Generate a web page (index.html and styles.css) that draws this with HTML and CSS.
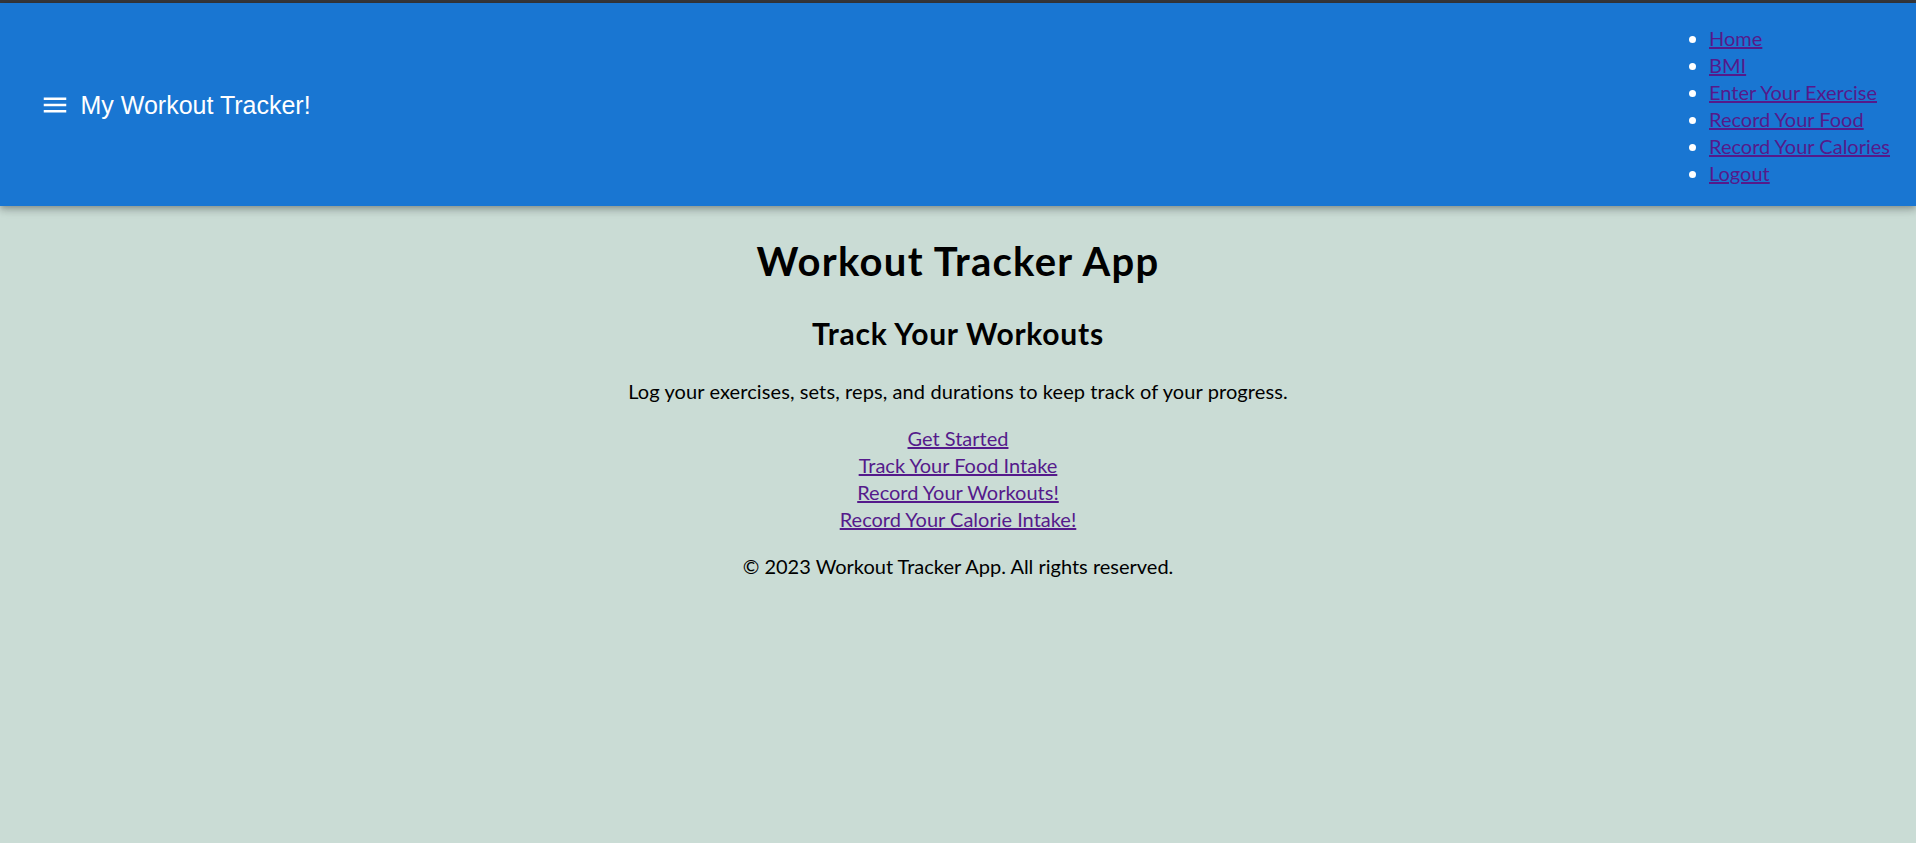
FILE: index.html
```html
<!DOCTYPE html>
<html lang="en">
<head>
<meta charset="utf-8">
<title>My Workout Tracker!</title>
<link rel="stylesheet" href="styles.css">
</head>
<body>
<div class="top-strip"></div>
<header class="app-bar">
  <div class="brand">
    <svg class="menu-icon" viewBox="0 0 24 24" width="30" height="30" aria-hidden="true">
      <path fill="#ffffff" d="M3 18h18v-2H3v2zm0-5h18v-2H3v2zm0-7v2h18V6H3z"/>
    </svg>
    <span class="brand-title">My Workout Tracker!</span>
  </div>
  <ul class="nav-list">
    <li><a href="#home">Home</a></li>
    <li><a href="#bmi">BMI</a></li>
    <li><a href="#exercise">Enter Your Exercise</a></li>
    <li><a href="#food">Record Your Food</a></li>
    <li><a href="#calories">Record Your Calories</a></li>
    <li><a href="#logout">Logout</a></li>
  </ul>
</header>
<main class="content">
  <h1 class="page-title">Workout Tracker App</h1>
  <h2 class="section-title">Track Your Workouts</h2>
  <p class="intro">Log your exercises, sets, reps, and durations to keep track of your progress.</p>
  <div class="link-list">
    <a href="#start">Get Started</a>
    <a href="#food-intake">Track Your Food Intake</a>
    <a href="#workouts">Record Your Workouts!</a>
    <a href="#calorie-intake">Record Your Calorie Intake!</a>
  </div>
  <p class="copyright">© 2023 Workout Tracker App. All rights reserved.</p>
</main>
</body>
</html>
```
FILE: styles.css
```css
html, body {
  margin: 0;
  padding: 0;
}

body {
  background: #cadcd5;
  font-family: "Lato", "Open Sans", sans-serif;
  font-size: 20px;
  line-height: 27px;
  color: #000;
  min-height: 843px;
}

a {
  color: #551a8b;
  text-decoration: underline;
}

.top-strip {
  height: 3px;
  background: #36373b;
}

.app-bar {
  position: relative;
  z-index: 1;
  display: flex;
  align-items: center;
  justify-content: space-between;
  background: #1976d2;
  color: #ffffff;
  padding: 0 26px 0 39.5px;
  box-shadow: 0 2.5px 5px -1.25px rgba(0, 0, 0, 0.2),
              0 5px 6.25px 0 rgba(0, 0, 0, 0.14),
              0 1.25px 12.5px 0 rgba(0, 0, 0, 0.12);
}

.brand {
  display: flex;
  align-items: center;
}

.menu-icon {
  display: block;
  margin-top: 1px;
}

.brand-title {
  margin-left: 11px;
  font-family: "Liberation Sans", Arial, sans-serif;
  font-size: 25px;
  font-weight: 400;
  line-height: 40px;
}

.nav-list {
  margin: 22px 0 19px;
  padding-left: 50px;
  list-style: disc;
  color: #ffffff;
}

.nav-list li {
  line-height: 27px;
}

.content {
  display: flex;
  flex-direction: column;
  align-items: center;
  text-align: center;
}

.page-title {
  margin: 29px 0 25px;
  font-size: 40px;
  line-height: 53px;
  font-weight: 700;
  letter-spacing: 1.3px;
}

.section-title {
  margin: 0;
  font-size: 30px;
  line-height: 40px;
  font-weight: 700;
  letter-spacing: 0.75px;
}

.intro {
  margin: 25px 0 0;
  letter-spacing: 0.1px;
}

.link-list {
  margin-top: 20px;
  display: flex;
  flex-direction: column;
  align-items: center;
}

.copyright {
  margin: 20px 0 0;
}
```
